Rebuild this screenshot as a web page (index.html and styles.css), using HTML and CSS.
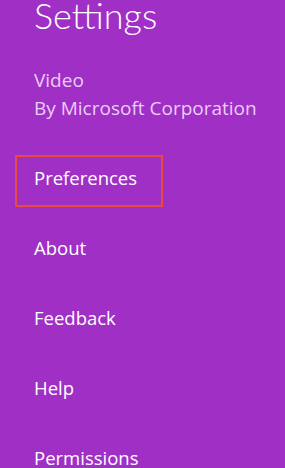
FILE: index.html
```html
<!DOCTYPE html>
<html lang="en">
<head>
    <meta charset="UTF-8">
    <meta name="viewport" content="width=device-width, initial-scale=1.0">
    <title>Settings</title>
    <link rel="stylesheet" href="styles.css">
</head>
<body>
    <aside class="settings-pane">
        <h1>Settings</h1>
        <div class="app-info">
            <p>Video</p>
            <p>By Microsoft Corporation</p>
        </div>
        <ul class="settings-list">
            <li><a href="#" class="selected">Preferences</a></li>
            <li><a href="#">About</a></li>
            <li><a href="#">Feedback</a></li>
            <li><a href="#">Help</a></li>
            <li><a href="#">Permissions</a></li>
        </ul>
    </aside>
</body>
</html>
```

FILE: styles.css
```css
/* Charm panel */
body, html {
    margin: 0;
    padding: 0;
    height: 100%;
    background-color: #a02fc6;
    font-family: "Open Sans", "Noto Sans", sans-serif;
    color: #fff;
    overflow: hidden;
}

h1 {
    margin: -7px 0 0 34px;
    font-family: "Lato", "Open Sans", sans-serif;
    font-size: 36px;
    font-weight: 300;
    line-height: 44px;
}

.app-info {
    margin: 29px 0 0 34px;
    color: #e9cdf3;
    font-size: 19px;
    line-height: 28px;
}

.app-info p {
    margin: 0;
}

.settings-list {
    list-style: none;
    margin: 33px 0 0 15px;
    padding: 0;
    display: flex;
    flex-direction: column;
    gap: 18px;
}

.settings-list a {
    display: inline-block;
    box-sizing: border-box;
    height: 52px;
    padding: 0 24px 0 17px;
    border: 2px solid transparent;
    color: #fff;
    text-decoration: none;
    font-size: 18.5px;
    line-height: 41px;
}

.settings-list a.selected {
    border-color: #e84b3c;
}
```
